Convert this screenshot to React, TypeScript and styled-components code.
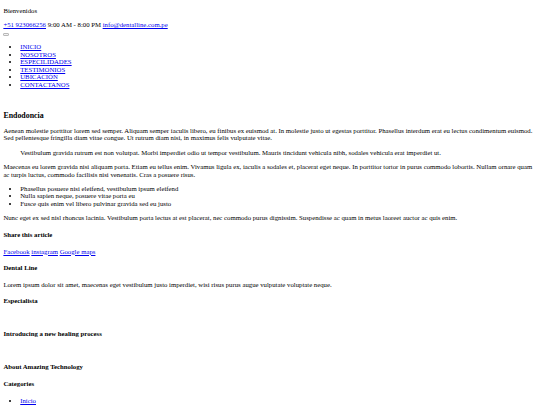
import styled, { createGlobalStyle } from "styled-components";

// the page is a plain, unstyled document shown at 540px wide,
// so every browser default is scaled down by the same factor
const k = 0.421875;
const s = (n: number) => `${(n * k).toFixed(3)}px`;

const GlobalStyle = createGlobalStyle`
  body {
    margin: 0;
    font-family: "Liberation Serif", "Times New Roman", serif;
    font-size: ${s(16)};
    line-height: 7.6px;
    color: #000;
    background: #fff;
  }
  a {
    color: #0000ee;
  }
  p {
    margin: ${s(16)} 0;
  }
`;

const Page = styled.div`
  display: flow-root;
  padding: 0 ${s(8)};
`;

const Welcome = styled.p`
  margin-bottom: 0;
`;

const Contact = styled.div`
  margin-top: ${s(16)};
`;

const ButtonLine = styled.div`
  height: 7.6px;
`;

const MenuButton = styled.button`
  box-sizing: border-box;
  width: 6px;
  height: 3px;
  padding: 0;
  vertical-align: -0.6px;
  border: 1px solid #b8b8b8;
  border-radius: 1px;
  background: #f2f2f2;
`;

const List = styled.ul`
  margin: ${s(16)} 0;
  padding-left: ${s(40)};
  list-style: disc;
`;

const Hero = styled.section`
  height: 7.6px;
`;

const Title = styled.h3`
  margin: ${s(18.72)} 0 ${s(16)};
  font-size: ${s(18.72)};
  line-height: 9.1px;
  font-weight: bold;
`;

const Quote = styled.blockquote`
  margin: ${s(16)} ${s(40)};
`;

const Heading = styled.h4`
  margin: ${s(21.28)} 0;
  font-size: ${s(16)};
  font-weight: bold;
`;

const Links = styled.p`
  display: block;
`;

const Media = styled.div`
  height: 7.6px;
`;

const navItems = [
  "INICIO",
  "NOSOTROS",
  "ESPECILIDADES",
  "TESTIMONIOS",
  "UBICACIÓN",
  "CONTACTANOS",
];

export default function App() {
  return (
    <Page>
      <GlobalStyle />
      <header>
        <Welcome>Bienvenidos</Welcome>
        <Contact>
          <a href="#">+51 923066256</a> 9:00 AM - 8:00 PM{" "}
          <a href="#">info@dentalline.com.pe</a>
        </Contact>
        <ButtonLine>
          <MenuButton aria-label="menu" />
        </ButtonLine>
        <nav>
          <List>
            {navItems.map((n) => (
              <li key={n}>
                <a href="#">{n}</a>
              </li>
            ))}
          </List>
        </nav>
      </header>
      <Hero />
      <article>
        <Title>Endodoncia</Title>
        <p>
          Aenean molestie porttitor lorem sed semper. Aliquam semper iaculis
          libero, eu finibus ex euismod at. In molestie justo ut egestas
          porttitor. Phasellus interdum erat eu lectus condimentum euismod. Sed
          pellentesque fringilla diam vitae congue. Ut rutrum diam nisi, in
          maximus felis vulputate vitae.
        </p>
        <Quote>
          Vestibulum gravida rutrum est non volutpat. Morbi imperdiet odio ut
          tempor vestibulum. Mauris tincidunt vehicula nibh, sodales vehicula
          erat imperdiet ut.
        </Quote>
        <p>
          Maecenas eu lorem gravida nisi aliquam porta. Etiam eu tellus enim.
          Vivamus ligula ex, iaculis a sodales et, placerat eget neque. In
          porttitor tortor in purus commodo lobortis. Nullam ornare quam ac
          turpis luctus, commodo facilisis nisi venenatis. Cras a posuere risus.
        </p>
        <List>
          <li>Phasellus posuere nisi eleifend, vestibulum ipsum eleifend</li>
          <li>Nulla sapien neque, posuere vitae porta eu</li>
          <li>Fusce quis enim vel libero pulvinar gravida sed eu justo</li>
        </List>
        <p>
          Nunc eget ex sed nisl rhoncus lacinia. Vestibulum porta lectus at est
          placerat, nec commodo purus dignissim. Suspendisse ac quam in metus
          laoreet auctor ac quis enim.
        </p>
        <Heading>Share this article</Heading>
        <Links>
          <a href="#">Facebook</a> <a href="#">instagram</a>{" "}
          <a href="#">Google maps</a>
        </Links>
      </article>
      <aside>
        <Heading>Dental Line</Heading>
        <p>
          Lorem ipsum dolor sit amet, maecenas eget vestibulum justo imperdiet,
          wisi risus purus augue vulputate voluptate neque.
        </p>
        <Heading>Especialista</Heading>
        <Media />
        <Heading>Introducing a new healing process</Heading>
        <Media />
        <Heading>About Amazing Technology</Heading>
        <Heading>Categories</Heading>
        <List>
          <li>
            <a href="#">Inicio</a>
          </li>
        </List>
      </aside>
    </Page>
  );
}
